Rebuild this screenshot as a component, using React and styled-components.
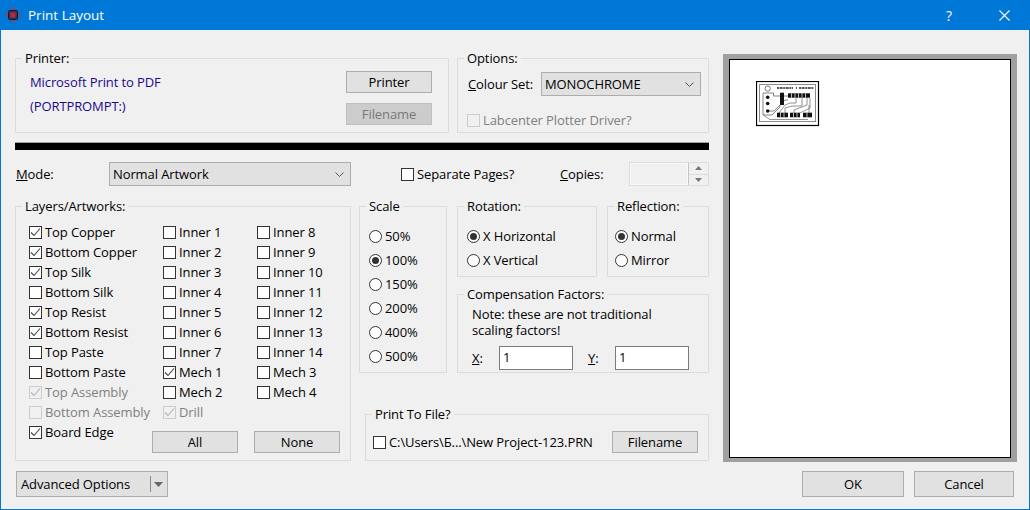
import styled, { createGlobalStyle } from 'styled-components';

const GlobalStyle = createGlobalStyle`
  html, body {
    margin: 0;
    padding: 0;
    background: #f0f0f0;
  }
  * {
    box-sizing: border-box;
  }
`;

const layersA = [
  ['Top Copper', true], ['Bottom Copper', true], ['Top Silk', true], ['Bottom Silk', false],
  ['Top Resist', true], ['Bottom Resist', true], ['Top Paste', false], ['Bottom Paste', false],
  ['Top Assembly', true, true], ['Bottom Assembly', false, true], ['Board Edge', true],
];
const layersB = [
  ['Inner 1'], ['Inner 2'], ['Inner 3'], ['Inner 4'], ['Inner 5'], ['Inner 6'], ['Inner 7'],
  ['Mech 1', true], ['Mech 2'], ['Drill', true, true],
];
const layersC = [
  ['Inner 8'], ['Inner 9'], ['Inner 10'], ['Inner 11'], ['Inner 12'], ['Inner 13'], ['Inner 14'],
  ['Mech 3'], ['Mech 4'],
];
const scales = ['50%', '100%', '150%', '200%', '400%', '500%'];

const Check = ({ label, checked, disabled }) => (
  <CheckRow $disabled={disabled}>
    <CheckBox $disabled={disabled}>
      {checked && (
        <svg width="11" height="11" viewBox="0 0 11 11">
          <path d="M1 5.5 L4 8.5 L10 1.5" fill="none" stroke={disabled ? '#b4b4b4' : '#444'} strokeWidth="1.1" />
        </svg>
      )}
    </CheckBox>
    <span>{label}</span>
  </CheckRow>
);

const Radio = ({ label, on }) => (
  <RadioRow>
    <RadioDot $on={on} />
    <span>{label}</span>
  </RadioRow>
);

const Chevron = () => (
  <svg width="9" height="5" viewBox="0 0 9 5">
    <path d="M0.5 0.5 L4.5 4.5 L8.5 0.5" fill="none" stroke="#555" strokeWidth="1" />
  </svg>
);

const AppIcon = () => (
  <svg width="16" height="16" viewBox="0 0 16 16">
    <path d="M5.5 0.5V15.5M8 0.5V15.5M10.5 0.5V15.5M0.5 5.5H15.5M0.5 8H15.5M0.5 10.5H15.5" stroke="#b8323c" strokeWidth="1" />
    <rect x="3.5" y="3.5" width="9" height="9" rx="1" fill="#0d3f78" stroke="#141a2c" />
    <rect x="5.5" y="5.5" width="5" height="5" fill="#d0202a" />
  </svg>
);

// small pcb preview, roughly the same traces as the print
const BoardThumb = () => (
  <svg width="64" height="46" viewBox="0 0 64 46">
    <rect x="0.5" y="0.5" width="62" height="44" fill="#fff" stroke="#000" strokeWidth="1.2" />
    <rect x="3.5" y="3.5" width="56" height="37" fill="#fff" stroke="#8a8a8a" strokeWidth="1" />
    <circle cx="11.7" cy="7.6" r="2.6" fill="none" stroke="#555" strokeWidth="0.8" />
    <path d="M21 7H37M40 7H41M43 7H58" stroke="#333" strokeWidth="2" strokeDasharray="2 0.6 3 0.6" opacity="0.8" />
    <path d="M7 12H17.5V15H24M7 12V34H16L24 26V24M12 30H18L29 19H32M28 15H33"
      fill="none" stroke="#666" strokeWidth="0.8" />
    <path d="M23 32L29 24L34 22H40V17M29 32V27L36 25H46V17M38 32V29L51 24V17M44 32L54 27V17M53 32V24M7 34L14 38.5H52"
      fill="none" stroke="#777" strokeWidth="0.8" />
    <circle cx="11.7" cy="16.3" r="1.8" fill="#111" />
    <circle cx="11.7" cy="22.5" r="1.8" fill="#111" />
    <circle cx="11.7" cy="30" r="1.8" fill="#111" />
    <rect x="24" y="11.7" width="4" height="12.3" fill="#111" />
    <rect x="32" y="12.3" width="22" height="4.4" fill="#111" />
    <rect x="21" y="31.7" width="11" height="4.6" fill="#111" />
    <rect x="34" y="31.7" width="10" height="4.6" fill="#111" />
    <rect x="47" y="31.7" width="9" height="4.6" fill="#111" />
    <path d="M35.5 12.3V16.7M39 12.3V16.7M42.5 12.3V16.7M46 12.3V16.7M49.5 12.3V16.7M24.5 31.7V36.3M28 31.7V36.3M37.5 31.7V36.3M41 31.7V36.3M51 31.7V36.3" stroke="#fff" strokeWidth="0.7" />
  </svg>
);

export default function App() {
  return (
    <>
      <GlobalStyle />
      <Window>
        <TitleBar>
          <AppIcon />
          <Title>Print Layout</Title>
          <HelpButton>?</HelpButton>
          <CloseButton>
            <svg width="11" height="11" viewBox="0 0 11 11">
              <path d="M0.5 0.5L10.5 10.5M10.5 0.5L0.5 10.5" stroke="#fff" strokeWidth="1.1" />
            </svg>
          </CloseButton>
        </TitleBar>

        <Body>
          <MainRow>
            <Controls>
              <TopRow>
                <Group $width="434px" $height="82px">
                  <legend>Printer:</legend>
                  <PrinterInner>
                    <PrinterName>
                      <div>Microsoft Print to PDF</div>
                      <div>(PORTPROMPT:)</div>
                    </PrinterName>
                    <ButtonStack>
                      <Button $w="86px" $h="22px">Printer</Button>
                      <Button $w="86px" $h="22px" $disabled>Filename</Button>
                    </ButtonStack>
                  </PrinterInner>
                </Group>
                <Group $width="252px" $height="82px">
                  <legend>Options:</legend>
                  <ColourRow>
                    <label><u>C</u>olour Set:</label>
                    <Select $w="160px" $h="24px">MONOCHROME<Chevron /></Select>
                  </ColourRow>
                  <PlotterRow>
                    <Check label="Labcenter Plotter Driver?" disabled />
                  </PlotterRow>
                </Group>
              </TopRow>

              <BlackBar />

              <ModeRow>
                <ModeLabel><u>M</u>ode:</ModeLabel>
                <Select $w="242px" $h="24px">Normal Artwork<Chevron /></Select>
                <SeparateCell>
                  <Check label="Separate Pages?" />
                </SeparateCell>
                <CopiesLabel><u>C</u>opies:</CopiesLabel>
                <Spinner>
                  <SpinField />
                  <SpinArrows>
                    <SpinArrow>
                      <svg width="7" height="4" viewBox="0 0 7 4"><path d="M3.5 0L7 4H0Z" fill="#777" /></svg>
                    </SpinArrow>
                    <SpinArrow>
                      <svg width="7" height="4" viewBox="0 0 7 4"><path d="M0 0H7L3.5 4Z" fill="#777" /></svg>
                    </SpinArrow>
                  </SpinArrows>
                </Spinner>
              </ModeRow>

              <LowerRow>
                <Group $width="336px" $height="262px">
                  <legend>Layers/Artworks:</legend>
                  <LayerGrid>
                    <LayerColumn>
                      {layersA.map(([l, c, d]) => <Check key={l} label={l} checked={c} disabled={d} />)}
                    </LayerColumn>
                    <LayerColumn>
                      {layersB.map(([l, c, d]) => <Check key={l} label={l} checked={c} disabled={d} />)}
                    </LayerColumn>
                    <LayerColumn>
                      {layersC.map(([l, c, d]) => <Check key={l} label={l} checked={c} disabled={d} />)}
                    </LayerColumn>
                  </LayerGrid>
                  <AllNoneRow>
                    <Button $w="86px" $h="22px">All</Button>
                    <Button $w="86px" $h="22px">None</Button>
                  </AllNoneRow>
                </Group>

                <RightSide>
                  <ScaleAndRest>
                    <Group $width="88px" $height="174px">
                      <legend>Scale</legend>
                      <RadioStack $left="9px">
                        {scales.map((s) => <Radio key={s} label={s} on={s === '100%'} />)}
                      </RadioStack>
                    </Group>
                    <Stack>
                      <RotationRow>
                        <Group $width="140px" $height="78px">
                          <legend>Rotation:</legend>
                          <RadioStack $left="9px">
                            <Radio label="X Horizontal" on />
                            <Radio label="X Vertical" />
                          </RadioStack>
                        </Group>
                        <Group $width="102px" $height="78px">
                          <legend>Reflection:</legend>
                          <RadioStack $left="7px">
                            <Radio label="Normal" on />
                            <Radio label="Mirror" />
                          </RadioStack>
                        </Group>
                      </RotationRow>
                      <Group $width="252px" $height="86px">
                        <legend>Compensation Factors:</legend>
                        <Note>Note: these are not traditional<br />scaling factors!</Note>
                        <FactorRow>
                          <FactorLabel><u>X</u>:</FactorLabel>
                          <FactorInput>1</FactorInput>
                          <FactorLabel $indent="15px"><u>Y</u>:</FactorLabel>
                          <FactorInput>1</FactorInput>
                        </FactorRow>
                      </Group>
                    </Stack>
                  </ScaleAndRest>
                  <PrintFileGroup $width="344px" $height="54px">
                    <legend>Print To File?</legend>
                    <PrintFileRow>
                      <Check label={'C:\\Users\\Б...\\New Project-123.PRN'} />
                      <Button $w="86px" $h="22px">Filename</Button>
                    </PrintFileRow>
                  </PrintFileGroup>
                </RightSide>
              </LowerRow>
            </Controls>

            <Preview>
              <Sheet>
                <BoardThumb />
              </Sheet>
            </Preview>
          </MainRow>

          <BottomRow>
            <SplitButton>
              <span>Advanced Options</span>
              <SplitDivider />
              <svg width="9" height="5" viewBox="0 0 9 5"><path d="M0 0H9L4.5 5Z" fill="#666" /></svg>
            </SplitButton>
            <BottomRight>
              <Button $w="102px" $h="26px">OK</Button>
              <Button $w="100px" $h="26px">Cancel</Button>
            </BottomRight>
          </BottomRow>
        </Body>
      </Window>
    </>
  );
}

const Window = styled.div`
  width: 1030px;
  height: 510px;
  background: #f0f0f0;
  border: 1px solid #0078d7;
  border-top: 0;
  display: flex;
  flex-direction: column;
  overflow: hidden;
  font-family: "Open Sans", "Noto Sans", sans-serif;
  font-size: 13px;
  letter-spacing: -0.1px;
  color: #000;
`;

const TitleBar = styled.div`
  height: 30px;
  flex: none;
  background: #0078d7;
  display: flex;
  align-items: center;
  padding-left: 4px;
  color: #fff;
`;

const Title = styled.div`
  flex: 1;
  margin-left: 7px;
  font-size: 13.5px;
  letter-spacing: 0;
  color: #fff;
`;

const HelpButton = styled.div`
  width: 46px;
  text-align: center;
  font-size: 14px;
  margin-right: 9px;
`;

const CloseButton = styled.div`
  width: 46px;
  margin-right: 2px;
  display: flex;
  justify-content: center;
`;

const Body = styled.div`
  flex: 1;
  display: flex;
  flex-direction: column;
  padding: 21px 12px 0 14px;
`;

const MainRow = styled.div`
  display: flex;
  align-items: flex-start;
  gap: 14px;
`;

const Controls = styled.div`
  width: 694px;
`;

const TopRow = styled.div`
  display: flex;
  gap: 8px;
`;

const Group = styled.fieldset`
  width: ${(p) => p.$width};
  height: ${(p) => p.$height};
  margin: 0;
  padding: 0;
  border: 1px solid #dcdcdc;
  min-width: 0;
  flex: none;
  legend {
    margin-left: 6px;
    padding: 0 3px;
    line-height: 14px;
    height: 14px;
    font-size: 13px;
  }
`;

const PrinterInner = styled.div`
  display: flex;
  justify-content: space-between;
  padding: 6px 16px 0 14px;
`;

const PrinterName = styled.div`
  color: #1a0a8c;
  display: flex;
  flex-direction: column;
  gap: 6px;
  line-height: 18px;
  padding-top: 2px;
`;

const ButtonStack = styled.div`
  display: flex;
  flex-direction: column;
  gap: 10px;
`;

const Button = styled.div`
  width: ${(p) => p.$w};
  height: ${(p) => p.$h};
  flex: none;
  display: flex;
  align-items: center;
  justify-content: center;
  background: ${(p) => (p.$disabled ? '#cccccc' : '#e1e1e1')};
  border: 1px solid ${(p) => (p.$disabled ? '#bfbfbf' : '#adadad')};
  color: ${(p) => (p.$disabled ? '#787878' : '#000')};
`;

const ColourRow = styled.div`
  display: flex;
  align-items: center;
  justify-content: space-between;
  padding: 7px 7px 0 10px;
`;

const PlotterRow = styled.div`
  padding: 16px 0 0 9px;
`;

const Select = styled.div`
  width: ${(p) => p.$w};
  height: ${(p) => p.$h};
  flex: none;
  display: flex;
  align-items: center;
  justify-content: space-between;
  padding: 0 6px 0 3px;
  background: #e1e1e1;
  border: 1px solid #adadad;
`;

const BlackBar = styled.div`
  height: 8px;
  margin-top: 9px;
  background: #000;
  border-top: 1px solid #a0a0a0;
`;

const ModeRow = styled.div`
  display: flex;
  align-items: center;
  margin-top: 12px;
  height: 24px;
`;

const ModeLabel = styled.div`
  width: 94px;
  padding-left: 1px;
`;

const SeparateCell = styled.div`
  margin-left: 50px;
  width: 159px;
`;

const CopiesLabel = styled.div`
  width: 69px;
`;

const Spinner = styled.div`
  display: flex;
  width: 80px;
  height: 24px;
  border: 1px solid #dcdcdc;
`;

const SpinField = styled.div`
  flex: 1;
  background: #f0f0f0;
  border: 1px solid #fafafa;
`;

const SpinArrows = styled.div`
  width: 20px;
  display: flex;
  flex-direction: column;
  border-left: 1px solid #c4c4c4;
`;

const SpinArrow = styled.div`
  flex: 1;
  display: flex;
  align-items: center;
  justify-content: center;
  & + & {
    border-top: 1px solid #dcdcdc;
  }
`;

const LowerRow = styled.div`
  display: flex;
  gap: 8px;
  margin-top: 13px;
`;

const LayerGrid = styled.div`
  display: grid;
  grid-template-columns: 134px 94px 1fr;
  padding: 11px 0 0 13px;
`;

const LayerColumn = styled.div`
  display: flex;
  flex-direction: column;
  gap: 4px;
`;

const CheckRow = styled.div`
  display: flex;
  align-items: center;
  gap: 3px;
  height: 16px;
  white-space: nowrap;
  color: ${(p) => (p.$disabled ? '#808080' : '#000')};
`;

const CheckBox = styled.span`
  width: 13px;
  height: 13px;
  flex: none;
  display: flex;
  align-items: center;
  justify-content: center;
  background: ${(p) => (p.$disabled ? 'transparent' : '#fff')};
  border: 1px solid ${(p) => (p.$disabled ? '#cccccc' : '#333')};
`;

const AllNoneRow = styled.div`
  display: flex;
  gap: 16px;
  justify-content: flex-end;
  margin-top: -9px;
  padding-right: 10px;
`;

const RightSide = styled.div`
  display: flex;
  flex-direction: column;
  align-items: flex-end;
  width: 350px;
`;

const ScaleAndRest = styled.div`
  display: flex;
  gap: 10px;
`;

const Stack = styled.div`
  display: flex;
  flex-direction: column;
  gap: 10px;
`;

const RotationRow = styled.div`
  display: flex;
  gap: 10px;
`;

const RadioStack = styled.div`
  display: flex;
  flex-direction: column;
  gap: 8px;
  padding: 15px 0 0 ${(p) => p.$left};
`;

const RadioRow = styled.div`
  display: flex;
  align-items: center;
  gap: 3px;
  height: 16px;
  white-space: nowrap;
`;

const RadioDot = styled.span`
  width: 13px;
  height: 13px;
  flex: none;
  border-radius: 50%;
  background: #fff;
  border: 1px solid #333;
  display: flex;
  align-items: center;
  justify-content: center;
  &::after {
    content: '';
    display: ${(p) => (p.$on ? 'block' : 'none')};
    width: 7px;
    height: 7px;
    border-radius: 50%;
    background: #333;
  }
`;

const Note = styled.div`
  line-height: 16px;
  padding: 5px 0 0 14px;
`;

const FactorRow = styled.div`
  display: grid;
  grid-template-columns: 27px 74px 42px 74px;
  align-items: center;
  padding: 8px 0 0 14px;
`;

const FactorLabel = styled.div`
  padding-left: ${(p) => p.$indent || 0};
`;

const FactorInput = styled.div`
  height: 24px;
  background: #fff;
  border: 1px solid #7a7a7a;
  padding-left: 3px;
  line-height: 20px;
`;

const PrintFileGroup = styled(Group)`
  margin-top: 34px;
`;

const PrintFileRow = styled.div`
  display: flex;
  align-items: center;
  justify-content: space-between;
  padding: 10px 10px 0 7px;
`;

const Preview = styled.div`
  width: 294px;
  height: 408px;
  flex: none;
  margin-top: 3px;
  background: #a0a0a0;
  padding: 5px 6px 4px 6px;
`;

const Sheet = styled.div`
  height: 100%;
  background: #fff;
  border: 1px solid #000;
  padding: 21px 0 0 26px;
`;

const BottomRow = styled.div`
  display: flex;
  align-items: flex-start;
  justify-content: space-between;
  margin-top: 9px;
  padding: 0 3px 0 1px;
`;

const SplitButton = styled.div`
  width: 152px;
  height: 26px;
  background: #e1e1e1;
  border: 1px solid #adadad;
  display: flex;
  align-items: center;
  padding-left: 4px;
  span {
    flex: 1;
  }
  svg {
    margin-right: 4px;
  }
`;

const SplitDivider = styled.i`
  width: 1px;
  height: 16px;
  background: #8c8c8c;
  margin-right: 3px;
`;

const BottomRight = styled.div`
  display: flex;
  gap: 10px;
`;
